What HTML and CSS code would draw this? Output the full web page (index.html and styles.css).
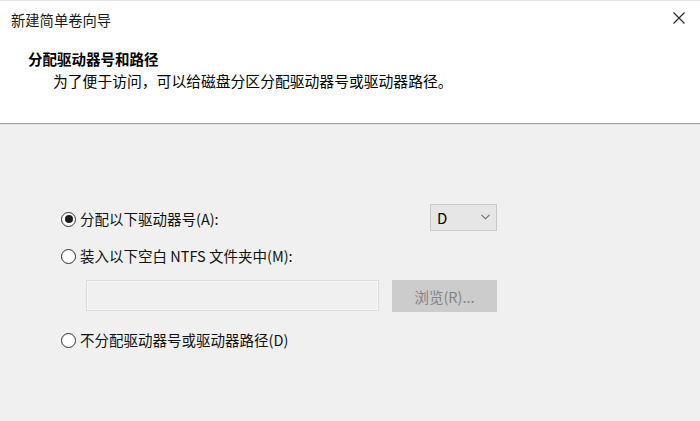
FILE: index.html
```html
<!DOCTYPE html>
<html lang="zh-CN">
<head>
<meta charset="utf-8">
<link rel="stylesheet" href="styles.css">
</head>
<body>
<div class="window">
  <div class="header">
    <div class="titlebar">
      <span class="title">新建简单卷向导</span>
      <svg class="close" width="12" height="12" viewBox="0 0 12 12"><path d="M0.5 0.5 L11.5 11.5 M11.5 0.5 L0.5 11.5" stroke="#2b2b2b" stroke-width="1.2" fill="none"/></svg>
    </div>
    <div class="heading">分配驱动器号和路径</div>
    <div class="subtitle">为了便于访问，可以给磁盘分区分配驱动器号或驱动器路径。</div>
  </div>
  <div class="content">
    <div class="row row-first">
      <label class="option"><span class="radio checked"></span><span>分配以下驱动器号(A):</span></label>
      <div class="select"><span>D</span><svg width="9" height="6" viewBox="0 0 9 6"><path d="M0.5 0.8 L4.5 4.8 L8.5 0.8" stroke="#6a6a6a" stroke-width="1.1" fill="none"/></svg></div>
    </div>
    <label class="option row-second"><span class="radio"></span><span>装入以下空白 NTFS 文件夹中(M):</span></label>
    <div class="path-row">
      <div class="path-input"></div>
      <div class="browse">浏览(R)...</div>
    </div>
    <label class="option row-third"><span class="radio"></span><span>不分配驱动器号或驱动器路径(D)</span></label>
  </div>
</div>
</body>
</html>
```
FILE: styles.css
```css
html, body {
  margin: 0;
  padding: 0;
  background: #f0f0f0;
}
body {
  width: 700px;
  height: 421px;
  overflow: hidden;
  font-family: "Noto Sans CJK SC", "Noto Sans", sans-serif;
  color: #000;
}
.window {
  height: 421px;
  border-top: 1px solid #e3e3e3;
  box-sizing: border-box;
}
.header {
  background: #fff;
  height: 122px;
  border-bottom: 1px solid #a0a0a0;
  box-shadow: 0 1px 0 #e2e2e2;
  box-sizing: content-box;
}
.titlebar {
  height: 36px;
  display: flex;
  align-items: center;
  justify-content: space-between;
  padding: 0 15px 0 11px;
}
.title {
  font-size: 14.3px;
  color: #1a1a1a;
  line-height: 21px;
}
.close {
  margin-top: -3px;
}
.heading {
  font-size: 14.5px;
  font-weight: bold;
  padding-left: 28px;
  margin-top: 11px;
  line-height: 22px;
}
.subtitle {
  font-size: 14.8px;
  padding-left: 53px;
  line-height: 22px;
}
.content {
  margin-top: 79px;
  margin-left: 61px;
  width: 436px;
  display: flex;
  flex-direction: column;
}
.row {
  display: flex;
  align-items: center;
  justify-content: space-between;
}
.row-first {
  height: 28px;
}
.row-first .option {
  margin-top: 4px;
}
.option {
  display: flex;
  align-items: center;
  height: 22px;
  font-size: 14.5px;
  line-height: 22px;
  color: #111;
}
.radio {
  width: 13px;
  height: 13px;
  border: 1px solid #333;
  border-radius: 50%;
  margin-right: 4px;
  display: flex;
  align-items: center;
  justify-content: center;
  background: #fff;
  flex: none;
}
.radio.checked::after {
  content: "";
  width: 8px;
  height: 8px;
  border-radius: 50%;
  background: #1a1a1a;
}
.select {
  width: 67px;
  height: 27px;
  box-sizing: border-box;
  border: 1px solid #c9c9c9;
  background: #e6e6e6;
  display: flex;
  align-items: center;
  justify-content: space-between;
  padding: 0 6px 0 6px;
  font-size: 15px;
}
.row-second {
  margin-top: 14px;
}
.path-row {
  display: flex;
  justify-content: space-between;
  margin-top: 13px;
  height: 32px;
}
.path-input {
  width: 293px;
  height: 31px;
  margin-left: 25px;
  box-sizing: border-box;
  border: 1px solid #dcdcdc;
  background: #f0f0f0;
  box-shadow: inset 0 0 0 1px #f7f7f7;
}
.browse {
  width: 105px;
  height: 32px;
  box-sizing: border-box;
  background: #cccccc;
  color: #838383;
  font-size: 14.5px;
  display: flex;
  align-items: center;
  justify-content: center;
}
.row-third {
  margin-top: 17px;
}
```
